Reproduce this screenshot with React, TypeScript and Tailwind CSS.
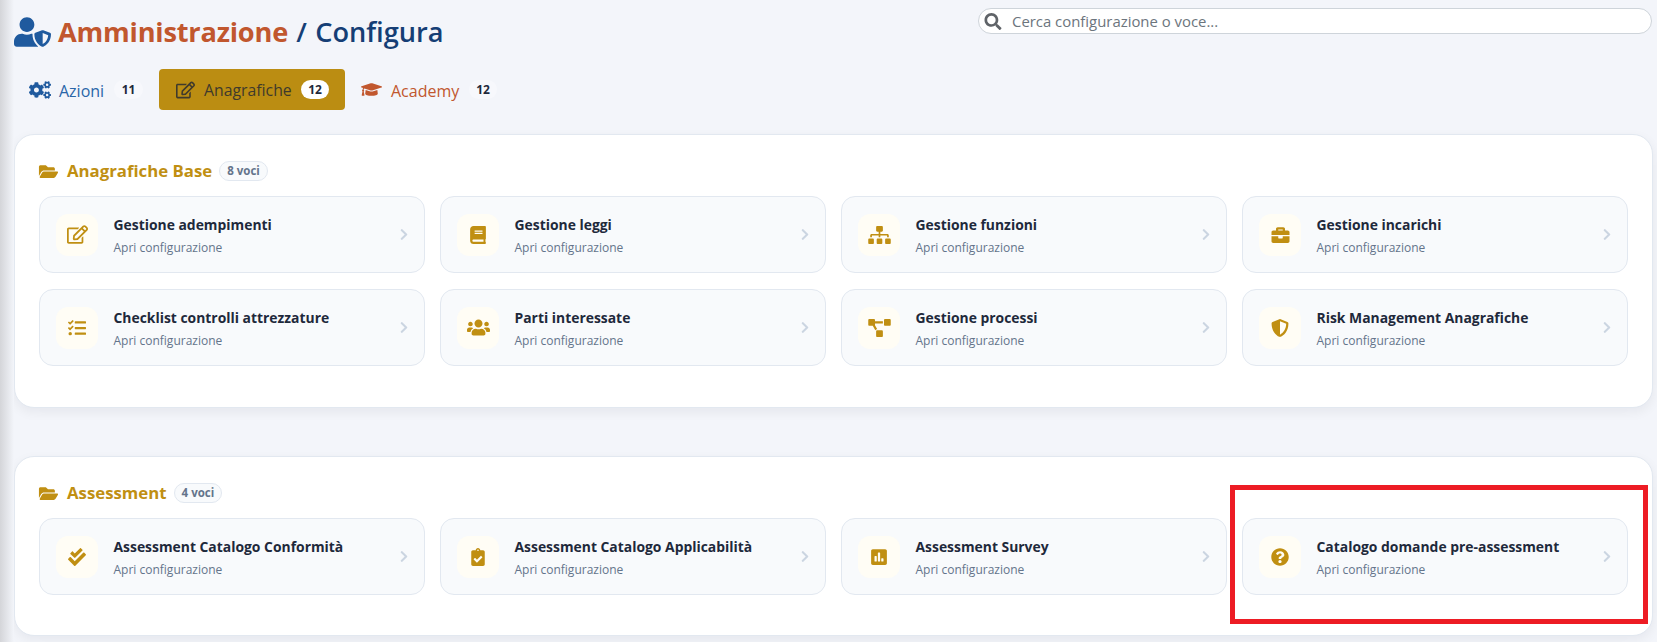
import React from "react";
import {
  FaUserShield, FaCogs, FaGraduationCap, FaFolderOpen, FaBook, FaSitemap, FaBriefcase,
  FaTasks, FaUsers, FaProjectDiagram, FaShieldAlt, FaCheckDouble, FaClipboardCheck,
  FaPoll, FaQuestionCircle, FaChevronRight, FaSearch, FaRegEdit,
} from "react-icons/fa";

type Item = { title: string; icon: React.ComponentType<{ className?: string }>; size: string };

const base: Item[] = [
  { title: "Gestione adempimenti", icon: FaRegEdit, size: "h-[19px] w-[21px]" },
  { title: "Gestione leggi", icon: FaBook, size: "h-[18px] w-[16px]" },
  { title: "Gestione funzioni", icon: FaSitemap, size: "h-[18px] w-[23px]" },
  { title: "Gestione incarichi", icon: FaBriefcase, size: "h-[18px] w-[19px]" },
  { title: "Checklist controlli attrezzature", icon: FaTasks, size: "h-[18px] w-[18px]" },
  { title: "Parti interessate", icon: FaUsers, size: "h-[19px] w-[23px]" },
  { title: "Gestione processi", icon: FaProjectDiagram, size: "h-[18px] w-[23px]" },
  { title: "Risk Management Anagrafiche", icon: FaShieldAlt, size: "h-[18px] w-[18px]" },
];
const assessment: Item[] = [
  { title: "Assessment Catalogo Conformità", icon: FaCheckDouble, size: "h-[18px] w-[18px]" },
  { title: "Assessment Catalogo Applicabilità", icon: FaClipboardCheck, size: "h-[18px] w-[14px]" },
  { title: "Assessment Survey", icon: FaPoll, size: "h-[18px] w-[16px]" },
  { title: "Catalogo domande pre-assessment", icon: FaQuestionCircle, size: "h-[18px] w-[18px]" },
];

function Card({ item }: { item: Item }) {
  const Icon = item.icon;
  return (
    <div className="flex h-[77px] items-center rounded-[14px] border border-[#e2e8f0] bg-[#f8fafc] pl-[16px] pr-[16px]">
      <div className="flex h-[42px] w-[42px] shrink-0 items-center justify-center rounded-[12px] bg-[#fffdf5]">
        <Icon className={`${item.size} shrink-0 text-[#c08f12]`} />
      </div>
      <div className="ml-[15.5px] flex min-w-0 flex-1 flex-col">
        <div className="mt-[1px] text-[13.9px] leading-[20px] font-bold text-[#1e293b]">{item.title}</div>
        <div className="mt-[5px] text-[12px] leading-[16px] text-[#64748b]">Apri configurazione</div>
      </div>
      <FaChevronRight className="h-[13px] w-[8px] text-[#cbd5e1]" />
    </div>
  );
}

function Section({ title, count, items, height }: { title: string; count: string; items: Item[]; height: string }) {
  return (
    <section className={`${height} rounded-[20px] border border-[#e2e8f0] bg-white px-[24px] pt-[25px] shadow-[0_4px_12px_rgba(15,23,42,0.06)]`}>
      <div className="mb-[14px] flex items-center">
        <FaFolderOpen className="ml-[-1px] h-[17px] w-[21px] text-[#c08f12]" />
        <h2 className="ml-[8px] text-[16.8px] leading-[22px] font-bold text-[#c08f12]">{title}</h2>
        <span className="ml-[7px] rounded-full border border-[#e2e8f0] bg-[#f8fafc] px-[7px] text-[11.5px] leading-[18px] font-bold text-[#64748b]">{count}</span>
      </div>
      <div className="grid grid-cols-4 gap-x-[15px] gap-y-[16px]">
        {items.map((i) => <Card key={i.title} item={i} />)}
      </div>
    </section>
  );
}

export default function App() {
  return (
    <div className="relative h-[642px] w-full overflow-hidden bg-[#f3f5fa] pl-[14px] pr-[4px] font-['Open_Sans','Noto_Sans',sans-serif]">
      <div className="absolute inset-y-0 left-0 w-[14px] bg-gradient-to-r from-[#d4d5d9] to-[#f3f5fa]" />
      <header className="relative flex h-[134px] flex-col">
        <div className="flex items-start justify-between">
          <div className="mt-[14px] flex items-center">
            <FaUserShield className="h-[30px] w-[37px] text-[#1f5a9e]" />
            <h1 className="ml-[7px] text-[27.2px] leading-[36px] font-semibold [word-spacing:1.2px] text-[#153e75]">
              <span className="font-bold tracking-[-0.2px] text-[#c1572e]">Amministrazione</span> / Configura
            </h1>
          </div>
          <div className="mt-[8px] mr-[1px] flex h-[26px] w-[674px] items-center rounded-full border border-[#ced4da] bg-white pl-[5px]">
            <FaSearch className="h-[17px] w-[18px] text-[#5f6368]" />
            <span className="ml-[10px] text-[14.9px] leading-[20px] text-[#6c757d]">Cerca configurazione o voce...</span>
          </div>
        </div>
        <nav className="mt-[19px] flex h-[41px] items-center">
          <div className="flex items-center pl-[15px] pr-[16px]">
            <FaCogs className="h-[18px] w-[22px] text-[#1f5a9e]" />
            <span className="ml-[8px] w-[46px] pt-[2px] text-[16px] text-[#2a66a8]">Azioni</span>
            <span className="ml-[9px] w-[29px] rounded-full bg-[#f7f8fc] text-center text-[12px] leading-[19px] font-bold text-[#1e293b]">11</span>
          </div>
          <div className="flex h-[41px] items-center rounded-[4px] bg-[#bb8d12] pl-[17px] pr-[16px]">
            <FaRegEdit className="h-[18px] w-[19px] text-[#3f3a2c]" />
            <span className="ml-[9px] w-[87px] pt-[2px] text-[15.8px] whitespace-nowrap text-[#3f3a2c]">Anagrafiche</span>
            <span className="ml-[10px] w-[28px] rounded-full bg-white text-center text-[12px] leading-[19px] font-bold text-[#1e293b]">12</span>
          </div>
          <div className="flex items-center pl-[16px]">
            <FaGraduationCap className="h-[17px] w-[21px] text-[#c1572e]" />
            <span className="ml-[9px] w-[68px] pt-[2px] text-[16px] text-[#c1572e]">Academy</span>
            <span className="ml-[10px] w-[28px] rounded-full bg-[#f7f8fc] text-center text-[12px] leading-[19px] font-bold text-[#1e293b]">12</span>
          </div>
        </nav>
      </header>
      <Section title="Anagrafiche Base" count="8 voci" items={base} height="h-[274px]" />
      <div className="h-[48px]" />
      <Section title="Assessment" count="4 voci" items={assessment} height="h-[180px]" />
      <div className="pointer-events-none absolute left-[1230px] top-[485px] h-[139px] w-[418px] border-[5px] border-[#ed1c24]" />
    </div>
  );
}
